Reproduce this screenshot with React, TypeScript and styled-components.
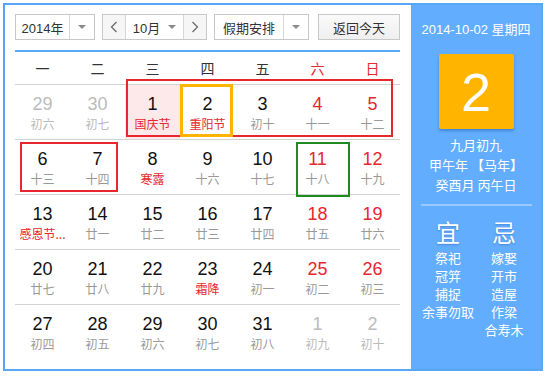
import React from "react";
import styled, { createGlobalStyle, css } from "styled-components";

const GlobalStyle = createGlobalStyle`
  body {
    margin: 0;
    background: #fff;
    font-family: "Liberation Sans", Arial, "Noto Sans CJK SC", sans-serif;
  }
`;

const Frame = styled.div`
  margin: 3px;
  width: 536px;
  height: 364px;
  border: 2px solid #56a7f5;
  display: flex;
  background: #fff;
`;

const Main = styled.div`
  width: 406px;
  padding: 9px 11px 0 10px;
  box-sizing: border-box;
`;

const Toolbar = styled.div`
  display: flex;
  height: 26px;
  gap: 7px;
`;

const Select = styled.div<{ $w: number }>`
  display: flex;
  width: ${(p) => p.$w}px;
  height: 26px;
  border: 1px solid #c8c8c8;
  box-sizing: border-box;
  background: #fff;
  font-size: 13px;
  color: #333;
`;

const SelectText = styled.div`
  flex: 1;
  display: flex;
  align-items: center;
  justify-content: center;
`;

const Caret = styled.div`
  width: 24px;
  border-left: 1px solid #d6d6d6;
  display: flex;
  align-items: center;
  justify-content: center;
  &::after {
    content: "";
    border-left: 4px solid transparent;
    border-right: 4px solid transparent;
    border-top: 4px solid #8a8a8a;
  }
`;

const MonthGroup = styled.div`
  display: flex;
  width: 105px;
  height: 26px;
  border: 1px solid #c8c8c8;
  box-sizing: border-box;
  font-size: 13px;
  color: #333;
`;

const Nav = styled.div<{ $side: "l" | "r" }>`
  width: 22px;
  display: flex;
  align-items: center;
  justify-content: center;
  background: #f6f6f6;
  ${(p) =>
    p.$side === "l"
      ? css`border-right: 1px solid #d6d6d6;`
      : css`border-left: 1px solid #d6d6d6;`}
`;

const MonthText = styled.div`
  flex: 1;
  display: flex;
  align-items: center;
  justify-content: center;
  gap: 8px;
  &::after {
    content: "";
    border-left: 4px solid transparent;
    border-right: 4px solid transparent;
    border-top: 4px solid #8a8a8a;
  }
`;

const TodayButton = styled.div`
  margin-left: 2px;
  width: 82px;
  height: 26px;
  border: 1px solid #c8c8c8;
  box-sizing: border-box;
  background: linear-gradient(#fafafa, #efefef);
  display: flex;
  align-items: center;
  justify-content: center;
  font-size: 13px;
  color: #333;
`;

const BlueRule = styled.div`
  margin-top: 10px;
  height: 2px;
  background: #5aabf7;
`;

const WeekHeader = styled.div`
  display: grid;
  grid-template-columns: repeat(7, 55px);
  height: 32px;
  border-bottom: 1px solid #d2d2d2;
`;

const WeekDay = styled.div<{ $red?: boolean }>`
  display: flex;
  align-items: center;
  justify-content: center;
  font-size: 14px;
  color: ${(p) => (p.$red ? "#e8262d" : "#333")};
`;

const Grid = styled.div`
  position: relative;
`;

const Row = styled.div<{ $last?: boolean }>`
  display: grid;
  grid-template-columns: repeat(7, 55px);
  height: 54px;
  border-bottom: 1px solid ${(p) => (p.$last ? "transparent" : "#d2d2d2")};
`;

const Cell = styled.div<{ $pink?: boolean }>`
  display: flex;
  flex-direction: column;
  align-items: center;
  padding-top: 9px;
  background: ${(p) => (p.$pink ? "#fde9e9" : "transparent")};
`;

const DayNum = styled.div<{ $tone: string }>`
  font-size: 18px;
  line-height: 20px;
  color: ${(p) => p.$tone};
`;

const Lunar = styled.div<{ $tone: string }>`
  font-size: 12px;
  line-height: 20px;
  white-space: nowrap;
  font-family: "Noto Sans CJK SC", sans-serif;
  color: ${(p) => p.$tone};
`;

const Mark = styled.div<{ $color: string; $w: number }>`
  position: absolute;
  box-sizing: border-box;
  border: ${(p) => p.$w}px solid ${(p) => p.$color};
  pointer-events: none;
`;

const Side = styled.div`
  flex: 1;
  background: #63adfe;
  color: #fff;
  display: flex;
  flex-direction: column;
  align-items: center;
  font-family: "Noto Sans CJK SC", sans-serif;
`;

const SideDate = styled.div`
  margin-top: 16px;
  font-size: 13px;
  line-height: 18px;
  font-family: "Liberation Sans", Arial, "Noto Sans CJK SC", sans-serif;
`;

const BigDay = styled.div`
  margin-top: 15px;
  width: 75px;
  height: 75px;
  border-radius: 2px;
  background: #ffb500;
  box-shadow: 0 2px 3px rgba(0, 60, 140, 0.35);
  display: flex;
  align-items: center;
  justify-content: center;
  font-family: "Liberation Sans", Arial, sans-serif;
  font-size: 54px;
  color: #fff;
`;

const LunarInfo = styled.div`
  margin-top: 6px;
  font-size: 13px;
  line-height: 20px;
  text-align: center;
`;

const SideRule = styled.div`
  margin-top: 9px;
  width: 111px;
  height: 2px;
  background: rgba(255, 255, 255, 0.35);
`;

const Almanac = styled.div`
  margin-top: 11px;
  display: grid;
  grid-template-columns: 56px 56px;
`;

const AlmanacCol = styled.div`
  display: flex;
  flex-direction: column;
  align-items: center;
`;

const AlmanacHead = styled.div`
  font-size: 24px;
  line-height: 30px;
  margin-bottom: 2px;
  text-shadow: 0 1px 2px rgba(0, 50, 120, 0.3);
`;

const AlmanacItem = styled.div`
  font-size: 13px;
  line-height: 18px;
  white-space: nowrap;
`;

const Chevron = ({ dir }: { dir: "l" | "r" }) => (
  <svg width="8" height="12" viewBox="0 0 8 12">
    <path
      d={dir === "l" ? "M6.5 1 L1.5 6 L6.5 11" : "M1.5 1 L6.5 6 L1.5 11"}
      fill="none"
      stroke="#666"
      strokeWidth="1.2"
    />
  </svg>
);

type Day = { d: number; l: string; t: "o" | "n" | "w"; f?: boolean; pink?: boolean };

const weeks: Day[][] = [
  [
    { d: 29, l: "初六", t: "o" },
    { d: 30, l: "初七", t: "o" },
    { d: 1, l: "国庆节", t: "n", f: true, pink: true },
    { d: 2, l: "重阳节", t: "n", f: true },
    { d: 3, l: "初十", t: "n" },
    { d: 4, l: "十一", t: "w" },
    { d: 5, l: "十二", t: "w" },
  ],
  [
    { d: 6, l: "十三", t: "n" },
    { d: 7, l: "十四", t: "n" },
    { d: 8, l: "寒露", t: "n", f: true },
    { d: 9, l: "十六", t: "n" },
    { d: 10, l: "十七", t: "n" },
    { d: 11, l: "十八", t: "w" },
    { d: 12, l: "十九", t: "w" },
  ],
  [
    { d: 13, l: "感恩节...", t: "n", f: true },
    { d: 14, l: "廿一", t: "n" },
    { d: 15, l: "廿二", t: "n" },
    { d: 16, l: "廿三", t: "n" },
    { d: 17, l: "廿四", t: "n" },
    { d: 18, l: "廿五", t: "w" },
    { d: 19, l: "廿六", t: "w" },
  ],
  [
    { d: 20, l: "廿七", t: "n" },
    { d: 21, l: "廿八", t: "n" },
    { d: 22, l: "廿九", t: "n" },
    { d: 23, l: "霜降", t: "n", f: true },
    { d: 24, l: "初一", t: "n" },
    { d: 25, l: "初二", t: "w" },
    { d: 26, l: "初三", t: "w" },
  ],
  [
    { d: 27, l: "初四", t: "n" },
    { d: 28, l: "初五", t: "n" },
    { d: 29, l: "初六", t: "n" },
    { d: 30, l: "初七", t: "n" },
    { d: 31, l: "初八", t: "n" },
    { d: 1, l: "初九", t: "o" },
    { d: 2, l: "初十", t: "o" },
  ],
];

const weekNames = ["一", "二", "三", "四", "五", "六", "日"];

// boxes drawn over the grid (holiday spans, selected day, today)
const marks = [
  { left: 111, top: -6, width: 267, height: 58, color: "#e8262d", w: 2 },
  { left: 165, top: -1, width: 53, height: 53, color: "#ffb400", w: 3 },
  { left: 5, top: 57, width: 98, height: 50, color: "#e8262d", w: 2 },
  { left: 281, top: 57, width: 54, height: 55, color: "#1f8a1f", w: 2 },
];

const numTone = (day: Day) =>
  day.t === "o" ? "#bbb" : day.t === "w" ? "#e8262d" : "#111";
const lunarTone = (day: Day) =>
  day.t === "o" ? "#bbb" : day.f ? "#e8262d" : "#999";

const yi = ["祭祀", "冠笄", "捕捉", "余事勿取"];
const ji = ["嫁娶", "开市", "造屋", "作梁", "合寿木"];

const App = () => {
  return (
    <>
      <GlobalStyle />
      <Frame>
        <Main>
          <Toolbar>
            <Select $w={80}>
              <SelectText>2014年</SelectText>
              <Caret />
            </Select>
            <MonthGroup>
              <Nav $side="l">
                <Chevron dir="l" />
              </Nav>
              <MonthText>10月</MonthText>
              <Nav $side="r">
                <Chevron dir="r" />
              </Nav>
            </MonthGroup>
            <Select $w={95}>
              <SelectText>假期安排</SelectText>
              <Caret />
            </Select>
            <TodayButton>返回今天</TodayButton>
          </Toolbar>
          <BlueRule />
          <WeekHeader>
            {weekNames.map((n, i) => (
              <WeekDay key={n} $red={i >= 5}>
                {n}
              </WeekDay>
            ))}
          </WeekHeader>
          <Grid>
            {weeks.map((week, r) => (
              <Row key={r} $last={r === weeks.length - 1}>
                {week.map((day, c) => (
                  <Cell key={c} $pink={day.pink}>
                    <DayNum $tone={numTone(day)}>{day.d}</DayNum>
                    <Lunar $tone={lunarTone(day)}>{day.l}</Lunar>
                  </Cell>
                ))}
              </Row>
            ))}
            {marks.map((m, i) => (
              <Mark
                key={i}
                $color={m.color}
                $w={m.w}
                style={{ left: m.left, top: m.top, width: m.width, height: m.height }}
              />
            ))}
          </Grid>
        </Main>
        <Side>
          <SideDate>2014-10-02 星期四</SideDate>
          <BigDay>2</BigDay>
          <LunarInfo>
            九月初九
            <br />
            甲午年 【马年】
            <br />
            癸酉月 丙午日
          </LunarInfo>
          <SideRule />
          <Almanac>
            <AlmanacCol>
              <AlmanacHead>宜</AlmanacHead>
              {yi.map((t) => (
                <AlmanacItem key={t}>{t}</AlmanacItem>
              ))}
            </AlmanacCol>
            <AlmanacCol>
              <AlmanacHead>忌</AlmanacHead>
              {ji.map((t) => (
                <AlmanacItem key={t}>{t}</AlmanacItem>
              ))}
            </AlmanacCol>
          </Almanac>
        </Side>
      </Frame>
    </>
  );
};

export default App;
